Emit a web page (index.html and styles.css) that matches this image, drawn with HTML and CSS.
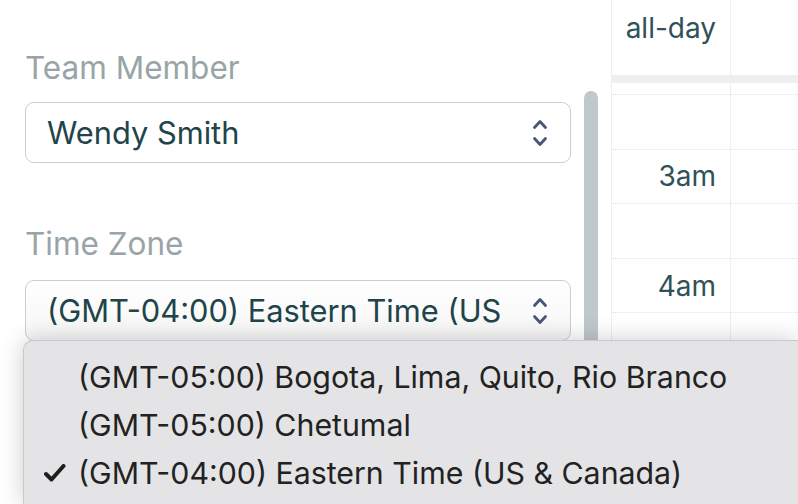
FILE: index.html
```html
<!DOCTYPE html>
<html>
<head>
<meta charset="utf-8">
<link rel="stylesheet" href="styles.css">
</head>
<body>
<div class="page">
  <div class="sidebar">
    <div class="field">
      <div class="label">Team Member</div>
      <div class="select">
        <span class="select-text">Wendy Smith</span>
        <svg class="chevrons" width="16" height="32" viewBox="0 0 16 32"><path d="M2.5 10.5 L8 4.5 L13.5 10.5 M2.5 21.5 L8 27.5 L13.5 21.5" fill="none" stroke="#4b5578" stroke-width="2.8" stroke-linecap="round" stroke-linejoin="round"/></svg>
      </div>
    </div>
    <div class="field field-tz">
      <div class="label">Time Zone</div>
      <div class="select">
        <span class="select-text">(GMT-04:00) Eastern Time (US</span>
        <svg class="chevrons" width="16" height="32" viewBox="0 0 16 32"><path d="M2.5 10.5 L8 4.5 L13.5 10.5 M2.5 21.5 L8 27.5 L13.5 21.5" fill="none" stroke="#4b5578" stroke-width="2.8" stroke-linecap="round" stroke-linejoin="round"/></svg>
      </div>
    </div>
  </div>
  <div class="scroll-col"><div class="thumb"></div></div>
  <div class="cal">
    <div class="row allday-row">
      <div class="axis">all-day</div>
      <div class="day"></div>
    </div>
    <div class="divider"></div>
    <div class="row slot partial"><div class="axis"></div><div class="day"></div></div>
    <div class="row slot half"><div class="axis"></div><div class="day"></div></div>
    <div class="row slot hour"><div class="axis">3am</div><div class="day"></div></div>
    <div class="row slot half"><div class="axis"></div><div class="day"></div></div>
    <div class="row slot hour"><div class="axis">4am</div><div class="day"></div></div>
    <div class="row slot half"><div class="axis"></div><div class="day"></div></div>
    <div class="row slot hour"><div class="axis"></div><div class="day"></div></div>
  </div>
</div>
<div class="menu">
  <div class="menu-item"><span class="check"></span><span>(GMT-05:00) Bogota, Lima, Quito, Rio Branco</span></div>
  <div class="menu-item"><span class="check"></span><span>(GMT-05:00) Chetumal</span></div>
  <div class="menu-item"><span class="check"><svg width="22" height="18" viewBox="0 0 22 18"><path d="M2 10 L7.5 15.5 L19.5 2" fill="none" stroke="#1e1e1e" stroke-width="4" stroke-linecap="round" stroke-linejoin="round"/></svg></span><span>(GMT-04:00) Eastern Time (US &amp; Canada)</span></div>
</div>
</body>
</html>
```
FILE: styles.css
```css
html, body {
  margin: 0;
  padding: 0;
  background: #ffffff;
}
body {
  width: 798px;
  height: 504px;
  overflow: hidden;
  position: relative;
  font-family: Inter, "Noto Sans", "Liberation Sans", sans-serif;
}
.page {
  display: flex;
  height: 504px;
  overflow: hidden;
}
.sidebar {
  width: 584px;
  flex: none;
  box-sizing: border-box;
  padding: 50px 13px 0 25px;
}
.label {
  font-size: 31.5px;
  line-height: 36px;
  color: #98a4a7;
}
.select {
  margin-top: 16px;
  height: 61px;
  box-sizing: border-box;
  border: 1.5px solid #cdcdcd;
  border-radius: 9px;
  display: flex;
  align-items: center;
  padding: 0 22px 0 21px;
  background: #fff;
}
.select-text {
  flex: 1;
  min-width: 0;
  white-space: nowrap;
  overflow: hidden;
  font-size: 30.8px;
  line-height: 36px;
  color: #21434a;
  margin-right: 18px;
}
.chevrons {
  flex: none;
}
.field-tz {
  margin-top: 63px;
}
.field-tz .select {
  margin-top: 18px;
  background: linear-gradient(#ffffff, #f6f6f6);
}
.scroll-col {
  width: 27px;
  flex: none;
  padding-top: 91px;
  box-sizing: border-box;
}
.thumb {
  width: 14px;
  height: 413px;
  background: #bfc8ca;
  border-radius: 7px 7px 0 0;
}
.cal {
  flex: 1;
  border-left: 1px solid #eeeeee;
  display: flex;
  flex-direction: column;
}
.row {
  display: flex;
}
.axis {
  width: 118px;
  flex: none;
  box-sizing: border-box;
  text-align: right;
  padding-right: 14px;
  font-size: 28px;
  color: #2f5157;
}
.day {
  flex: 1;
  border-left: 1px solid #eeeeee;
}
.allday-row {
  height: 75px;
}
.allday-row .axis {
  padding-top: 11px;
  line-height: 34px;
}
.divider {
  height: 8px;
  background: #efefef;
}
.partial {
  height: 11px;
}
.slot.half, .slot.hour {
  height: 54.6px;
  box-sizing: border-box;
}
.slot.half .axis, .slot.half .day, .slot.hour .axis {
  border-top: 1px dotted #e2e2e2;
}
.slot.hour .day {
  border-top: 1px solid #eeeeee;
}
.slot.hour .axis {
  display: flex;
  align-items: center;
  justify-content: flex-end;
}
.menu {
  position: absolute;
  left: 23px;
  top: 340px;
  right: 0;
  bottom: 0;
  box-sizing: border-box;
  padding-top: 12px;
  background: #e4e4e6;
  border-top: 1px solid #c9c9cb;
  border-left: 1px solid #c9c9cb;
  border-radius: 10px 0 0 0;
  box-shadow: 0 0 24px rgba(0, 0, 0, 0.2);
}
.menu-item {
  display: flex;
  align-items: center;
  height: 48px;
  padding-left: 20px;
  font-size: 30.3px;
  line-height: 48px;
  color: #222222;
  white-space: nowrap;
}
.check {
  width: 34px;
  flex: none;
  display: flex;
  align-items: center;
}
```
